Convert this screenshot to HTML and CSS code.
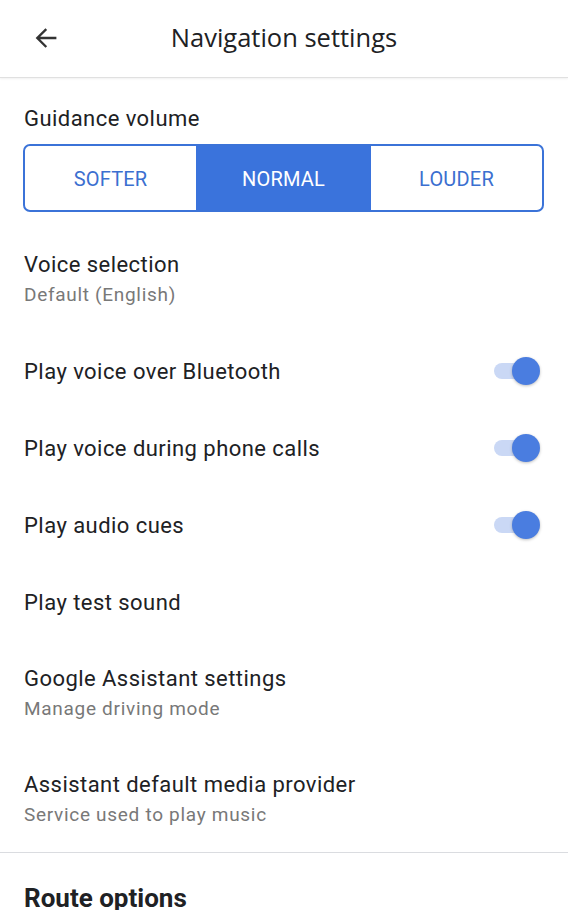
FILE: index.html
```html
<!DOCTYPE html>
<html>
<head>
<meta charset="utf-8">
<link rel="stylesheet" href="styles.css">
</head>
<body>
<header class="appbar">
  <svg class="back" width="26" height="26" viewBox="0 0 24 24"><path d="M20.5 12H4.5M11.5 4.5L4 12l7.5 7.5" fill="none" stroke="#333" stroke-width="2.2" stroke-linecap="square"/></svg>
  <h1 class="title">Navigation settings</h1>
</header>
<main>
  <section class="volume">
    <div class="label">Guidance volume</div>
    <div class="segmented">
      <div class="seg">SOFTER</div>
      <div class="seg active">NORMAL</div>
      <div class="seg">LOUDER</div>
    </div>
  </section>
  <div class="row two">
    <div class="texts"><div class="primary">Voice selection</div><div class="secondary">Default (English)</div></div>
  </div>
  <div class="row">
    <div class="texts"><div class="primary">Play voice over Bluetooth</div></div>
    <div class="switch"><span class="track"></span><span class="thumb"></span></div>
  </div>
  <div class="row">
    <div class="texts"><div class="primary">Play voice during phone calls</div></div>
    <div class="switch"><span class="track"></span><span class="thumb"></span></div>
  </div>
  <div class="row">
    <div class="texts"><div class="primary">Play audio cues</div></div>
    <div class="switch"><span class="track"></span><span class="thumb"></span></div>
  </div>
  <div class="row">
    <div class="texts"><div class="primary">Play test sound</div></div>
  </div>
  <div class="row two">
    <div class="texts"><div class="primary">Google Assistant settings</div><div class="secondary">Manage driving mode</div></div>
  </div>
  <div class="row two">
    <div class="texts"><div class="primary">Assistant default media provider</div><div class="secondary">Service used to play music</div></div>
  </div>
  <div class="divider"></div>
  <h2 class="heading">Route options</h2>
</main>
</body>
</html>
```
FILE: styles.css
```css
html, body { margin: 0; padding: 0; background: #fff; }
body { font-family: Roboto, "Noto Sans", sans-serif; color: #202124; width: 568px; overflow: hidden; }
.appbar {
  height: 77px;
  border-bottom: 1px solid #e0e0e0;
  box-shadow: 0 1px 2px rgba(0,0,0,0.06);
  display: flex;
  align-items: center;
  position: relative;
}
.back { position: absolute; left: 33px; top: 25px; }
.title {
  margin: 0;
  width: 100%;
  text-align: center;
  font-family: "Open Sans", Roboto, sans-serif;
  font-weight: 400;
  font-size: 25.5px;
  color: #202124;
  transform: translateY(-2px);
}
.volume { padding: 26px 24px 14px 23px; }
.label { font-size: 22px; letter-spacing: 0.45px; line-height: 30px; color: #202124; padding-left: 1px; }
.segmented {
  margin-top: 10px;
  height: 64px;
  border: 2px solid #3b73d8;
  border-radius: 7px;
  display: grid;
  grid-template-columns: 171px 175px 1fr;
  overflow: hidden;
}
.seg {
  display: flex; align-items: center; justify-content: center;
  font-size: 20px; color: #3b6fd0; letter-spacing: 0.2px; padding-top: 1px;
}
.seg.active { background: #3a73dc; color: #fff; }
.row {
  height: 77px;
  display: flex;
  align-items: center;
  justify-content: space-between;
  padding: 0 28px 0 24px;
}
.row.two { height: 106px; }
.texts { padding-top: 2px; }
.primary { font-size: 22px; letter-spacing: 0.45px; line-height: 30px; color: #202124; }
.secondary { font-size: 19px; letter-spacing: 0.7px; line-height: 30px; color: #787878; }
.switch { position: relative; width: 46px; height: 28px; }
.track {
  position: absolute; left: 0; top: 6px; width: 38px; height: 16px;
  border-radius: 8px; background: #cad8f5;
}
.thumb {
  position: absolute; right: 0; top: 0; width: 28px; height: 28px;
  border-radius: 50%; background: #4a7de0;
  box-shadow: 0 1px 3px rgba(0,0,0,0.25);
}
.divider { height: 1px; background: #dadce0; }
.heading {
  margin: 0;
  padding: 30px 24px 0;
  font-size: 26px; font-weight: 700; line-height: 30px; color: #202124;
}
```
